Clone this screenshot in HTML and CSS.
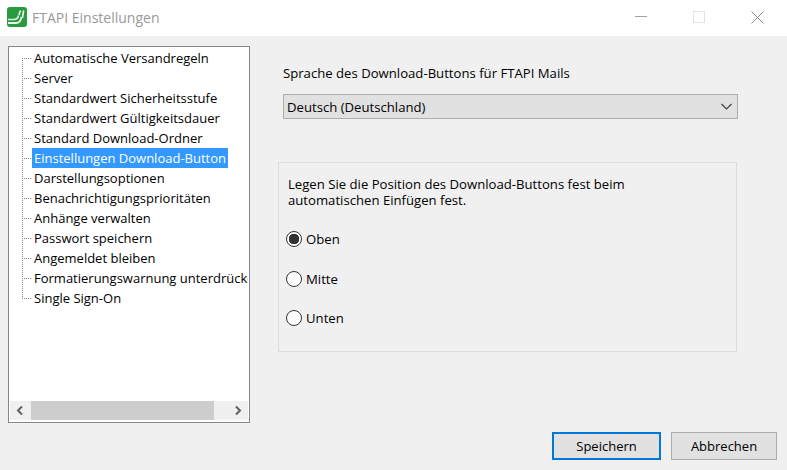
FILE: index.html
```html
<!DOCTYPE html>
<html lang="de">
<head>
<meta charset="utf-8">
<title>FTAPI Einstellungen</title>
<link rel="stylesheet" href="styles.css">
</head>
<body>
<div class="window">
  <header class="titlebar">
    <svg class="logo" width="20" height="20" viewBox="0 0 20 20">
      <rect width="20" height="20" rx="3" fill="#2b9a3f"/>
      <path d="M1 12.500h6c3 0 4-1.500 4.500-4" fill="none" stroke="#d8eedc" stroke-width="1.600"/>
      <path d="M1 16h8c4 0 5-2.500 5.500-6" fill="none" stroke="#e6f4e8" stroke-width="1.800"/>
      <path d="M12 8c.5-2 .8-2.500 1.500-4.500M15.500 11c.3-3 .6-5 1.200-7.500" fill="none" stroke="#f2faf3" stroke-width="1.600"/>
    </svg>
    <span class="title">FTAPI Einstellungen</span>
    <div class="controls">
      <svg class="ctl" width="12" height="12" viewBox="0 0 12 12"><path d="M0 5.500h12" stroke="#a0a0a0" fill="none"/></svg>
      <svg class="ctl" width="12" height="12" viewBox="0 0 12 12"><rect x=".5" y=".5" width="11" height="11" stroke="#e3e3e3" fill="none"/></svg>
      <svg class="ctl" width="13" height="13" viewBox="0 0 13 13"><path d="M.5.500l12 12M12.500.500l-12 12" stroke="#8a8a8a" fill="none"/></svg>
    </div>
  </header>
  <div class="content">
    <aside class="tree">
      <ul class="rows">
        <li class="row first"><span class="conn"></span><span class="item">Automatische Versandregeln</span></li>
        <li class="row"><span class="conn"></span><span class="item">Server</span></li>
        <li class="row"><span class="conn"></span><span class="item">Standardwert Sicherheitsstufe</span></li>
        <li class="row"><span class="conn"></span><span class="item">Standardwert Gültigkeitsdauer</span></li>
        <li class="row"><span class="conn"></span><span class="item">Standard Download-Ordner</span></li>
        <li class="row"><span class="conn"></span><span class="item selected">Einstellungen Download-Button</span></li>
        <li class="row"><span class="conn"></span><span class="item">Darstellungsoptionen</span></li>
        <li class="row"><span class="conn"></span><span class="item">Benachrichtigungsprioritäten</span></li>
        <li class="row"><span class="conn"></span><span class="item">Anhänge verwalten</span></li>
        <li class="row"><span class="conn"></span><span class="item">Passwort speichern</span></li>
        <li class="row"><span class="conn"></span><span class="item">Angemeldet bleiben</span></li>
        <li class="row"><span class="conn"></span><span class="item">Formatierungswarnung unterdrücken</span></li>
        <li class="row last"><span class="conn"></span><span class="item">Single Sign-On</span></li>
      </ul>
      <div class="scrollbar">
        <svg class="arrow" width="21" height="19" viewBox="0 0 21 19"><path d="M12 5.500l-4 4 4 4" fill="none" stroke="#606060" stroke-width="2"/></svg>
        <div class="track"><div class="thumb"></div></div>
        <svg class="arrow" width="21" height="19" viewBox="0 0 21 19"><path d="M9 5.500l4 4-4 4" fill="none" stroke="#606060" stroke-width="2"/></svg>
      </div>
    </aside>
    <main class="panel">
      <label class="lang-label">Sprache des Download-Buttons für FTAPI Mails</label>
      <div class="select">
        <span>Deutsch (Deutschland)</span>
        <svg width="11" height="7" viewBox="0 0 11 7"><path d="M.5 1l5 5 5-5" fill="none" stroke="#404040" stroke-width="1.200"/></svg>
      </div>
      <section class="group">
        <p class="group-text">Legen Sie die Position des Download-Buttons fest beim<br>automatischen Einfügen fest.</p>
        <div class="radios">
          <div class="radio-row"><span class="radio checked"></span><span>Oben</span></div>
          <div class="radio-row"><span class="radio"></span><span>Mitte</span></div>
          <div class="radio-row"><span class="radio"></span><span>Unten</span></div>
        </div>
      </section>
    </main>
  </div>
  <footer class="footer">
    <button class="btn primary">Speichern</button>
    <button class="btn cancel">Abbrechen</button>
  </footer>
</div>
</body>
</html>
```
FILE: styles.css
```css
* { box-sizing: border-box; }
html, body { margin: 0; padding: 0; }
body {
  width: 787px;
  height: 470px;
  overflow: hidden;
  background: #f0f0f0;
  color: #000;
  font-family: "Open Sans", "Noto Sans", sans-serif;
  font-size: 13px;
}
.window { display: flex; flex-direction: column; height: 470px; }

.titlebar {
  height: 36px;
  background: #fff;
  display: flex;
  align-items: center;
  padding-left: 7px;
  flex: none;
}
.logo { flex: none; margin-top: -2px; }
.title { margin-left: 5px; margin-top: -1px; font-size: 14px; color: #999; }
.controls { margin-left: auto; display: flex; align-items: center; height: 34px; margin-top: -2px; padding-right: 23px; gap: 46px; }
.ctl { display: block; }

.content { flex: 1; display: flex; padding: 10px 0 0 8px; min-height: 0; }

.tree {
  width: 242px;
  height: 377px;
  flex: none;
  background: #fff;
  border: 1px solid #828790;
  padding: 1px;
  display: flex;
  flex-direction: column;
}
.rows { list-style: none; margin: 0; padding: 0 0 0 12px; flex: 1; overflow: hidden; }
.row { display: flex; height: 20px; white-space: nowrap; }
.conn {
  flex: none;
  width: 10px;
  height: 20px;
  background-image:
    repeating-linear-gradient(to bottom, #808080 0 1px, transparent 1px 2px),
    repeating-linear-gradient(to right, #808080 0 1px, transparent 1px 2px);
  background-repeat: no-repeat;
  background-size: 1px 20px, 10px 1px;
  background-position: 0 0, 0 10px;
}
.row.first .conn { background-size: 1px 10px, 10px 1px; background-position: 0 10px, 0 10px; }
.row.last .conn { background-size: 1px 10px, 10px 1px; background-position: 0 0, 0 10px; }
.item { padding: 0 2px; line-height: 20px; height: 20px; flex: none; }
.item.selected { background: #3399ff; color: #fff; }

.scrollbar { height: 19px; display: flex; flex: none; background: #f0f0f0; margin-bottom: 1px; }
.arrow { flex: none; display: block; }
.track { flex: 1; }
.thumb { width: 183px; height: 19px; background: #cdcdcd; }

.panel { width: 459px; margin-left: 28px; display: flex; flex-direction: column; flex: none; font-size: 13.150px; }
.lang-label { margin: 18px 0 0 5px; line-height: 18px; height: 18px; }
.select {
  margin: 12px 0 0 5px;
  width: 455px;
  height: 25px;
  background: #e1e1e1;
  border: 1px solid #adadad;
  display: flex;
  align-items: center;
  justify-content: space-between;
  padding: 0 5px 0 3px;
}
.group {
  margin-top: 43px;
  width: 459px;
  height: 190px;
  border: 1px solid #dcdcdc;
  padding: 13px 9px 0;
}
.group-text { margin: 0; line-height: 16px; }
.radios { margin-top: 21px; margin-left: -2px; display: flex; flex-direction: column; gap: 19.500px; }
.radio-row { display: flex; align-items: center; height: 20px; gap: 4px; }
.radio {
  width: 16px;
  height: 16px;
  border-radius: 50%;
  border: 1px solid #333;
  background: #fff;
  flex: none;
}
.radio.checked { background: radial-gradient(circle, #333 0 5px, #fff 5.500px); }

.footer { height: 38px; flex: none; display: flex; padding: 0 10px 10px 552px; gap: 10px; margin-top: -1px; }
.btn { font: inherit; color: #000; background: #e1e1e1; height: 28px; padding: 0; }
.primary { width: 109px; border: 2px solid #0078d7; }
.cancel { width: 106px; border: 1px solid #adadad; }
```
